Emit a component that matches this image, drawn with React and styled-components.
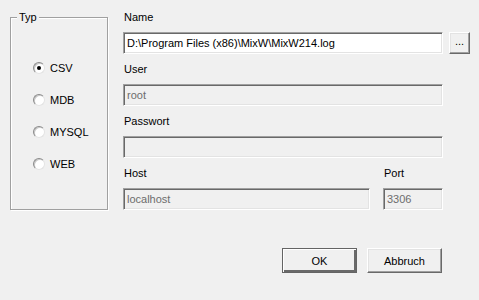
import React, { useState } from "react";
import styled, { createGlobalStyle } from "styled-components";

const GlobalStyle = createGlobalStyle`
  html, body {
    margin: 0;
    padding: 0;
    background: #f0f0f0;
  }
  body {
    font-family: "Liberation Sans", Arial, sans-serif;
    font-size: 11px;
    color: #000;
  }
`;

const TYPES = ["CSV", "MDB", "MYSQL", "WEB"];

function App() {
  const [typ, setTyp] = useState("CSV");

  return (
    <Dialog>
      <GlobalStyle />
      <Body>
        <GroupBox>
          <Legend>Typ</Legend>
          <RadioList>
            {TYPES.map((t) => (
              <RadioRow key={t} onClick={() => setTyp(t)}>
                <RadioCircle checked={typ === t} />
                {t}
              </RadioRow>
            ))}
          </RadioList>
        </GroupBox>

        <Form>
          <Field>
            <Label>Name</Label>
            <Row>
              <TextBox value="D:\Program Files (x86)\MixW\MixW214.log" readOnly />
              <BrowseButton>...</BrowseButton>
            </Row>
          </Field>
          <Field>
            <Label>User</Label>
            <TextBox value="root" disabled />
          </Field>
          <Field>
            <Label>Passwort</Label>
            <TextBox value="" disabled />
          </Field>
          <HostRow>
            <Field>
              <Label>Host</Label>
              <TextBox value="localhost" disabled />
            </Field>
            <Field>
              <Label>Port</Label>
              <TextBox value="3306" disabled />
            </Field>
          </HostRow>
        </Form>
      </Body>

      <Buttons>
        <Button primary>OK</Button>
        <Button>Abbruch</Button>
      </Buttons>
    </Dialog>
  );
}

export default App;

const Dialog = styled.div`
  width: 479px;
  height: 300px;
  box-sizing: border-box;
  background: #f0f0f0;
  display: flex;
  flex-direction: column;
`;

const Body = styled.div`
  display: flex;
  align-items: flex-start;
  padding: 9px 0 0 10px;
`;

const GroupBox = styled.fieldset`
  margin: 1px 0 0 0;
  padding: 0 0 0 22px;
  width: 98px;
  height: 200px;
  box-sizing: border-box;
  border: 1px solid #a0a0a0;
  box-shadow: inset 1px 1px 0 #fff, 1px 1px 0 #fff;
`;

const Legend = styled.legend`
  padding: 0 2px;
  line-height: 14px;
  background: #f0f0f0;
  margin-left: -16px;
`;

const RadioList = styled.div`
  display: flex;
  flex-direction: column;
  gap: 16px;
  padding-top: 36px;
`;

const RadioRow = styled.label`
  display: flex;
  align-items: center;
  gap: 5px;
  height: 16px;
  line-height: 16px;
  cursor: default;
`;

const RadioCircle = styled.span`
  position: relative;
  width: 12px;
  height: 12px;
  box-sizing: border-box;
  border-radius: 50%;
  background: #fff;
  border: 1px solid;
  border-color: #8a8a8a #e3e3e3 #e3e3e3 #8a8a8a;
  box-shadow: inset 1px 1px 0 #c8c8c8;

  &::after {
    content: "";
    display: ${(p) => (p.checked ? "block" : "none")};
    position: absolute;
    left: 3px;
    top: 3px;
    width: 4px;
    height: 4px;
    border-radius: 50%;
    background: #000;
  }
`;

const Form = styled.div`
  display: flex;
  flex-direction: column;
  gap: 7px;
  margin-left: 15px;
  width: 347px;
`;

const Field = styled.div`
  display: flex;
  flex-direction: column;
  gap: 7px;
`;

const Label = styled.div`
  height: 16px;
  line-height: 16px;
  padding-left: 1px;
`;

const Row = styled.div`
  display: flex;
  gap: 6px;
`;

const HostRow = styled.div`
  display: grid;
  grid-template-columns: 247px 60px;
  column-gap: 13px;
`;

const TextBox = styled.input`
  width: 100%;
  max-width: 320px;
  height: 22px;
  box-sizing: border-box;
  margin: 0;
  padding: 0 3px;
  font-family: "Liberation Sans", Arial, sans-serif;
  font-size: 11px;
  color: #000;
  background: #fff;
  border: 1px solid;
  border-color: #a0a0a0 #fff #fff #a0a0a0;
  box-shadow: inset 1px 1px 0 #696969, inset -1px -1px 0 #e3e3e3;
  outline: none;

  &:disabled {
    background: #f0f0f0;
    color: #6d6d6d;
  }
`;

const BrowseButton = styled.button`
  width: 22px;
  height: 22px;
  margin: 0;
  padding: 0 0 4px;
  box-sizing: border-box;
  font-family: "Liberation Sans", Arial, sans-serif;
  font-size: 11px;
  color: #000;
  background: #f0f0f0;
  border: 1px solid;
  border-color: #fff #696969 #696969 #fff;
  box-shadow: inset -1px -1px 0 #a0a0a0, inset 1px 1px 0 #e3e3e3;
`;

const Buttons = styled.div`
  display: flex;
  justify-content: flex-end;
  gap: 10px;
  margin-top: 38px;
  padding-right: 37px;
`;

const Button = styled.button`
  width: 75px;
  height: 25px;
  margin: 0;
  padding: 0;
  box-sizing: border-box;
  font-family: "Liberation Sans", Arial, sans-serif;
  font-size: 11px;
  color: #000;
  background: #f0f0f0;
  border: 1px solid;
  border-color: ${(p) => (p.primary ? "#646464" : "#fff #696969 #696969 #fff")};
  box-shadow: ${(p) =>
    p.primary
      ? "inset 1px 1px 0 #fff, inset -2px -2px 0 #696969"
      : "inset -1px -1px 0 #a0a0a0, inset 1px 1px 0 #e3e3e3"};
`;
